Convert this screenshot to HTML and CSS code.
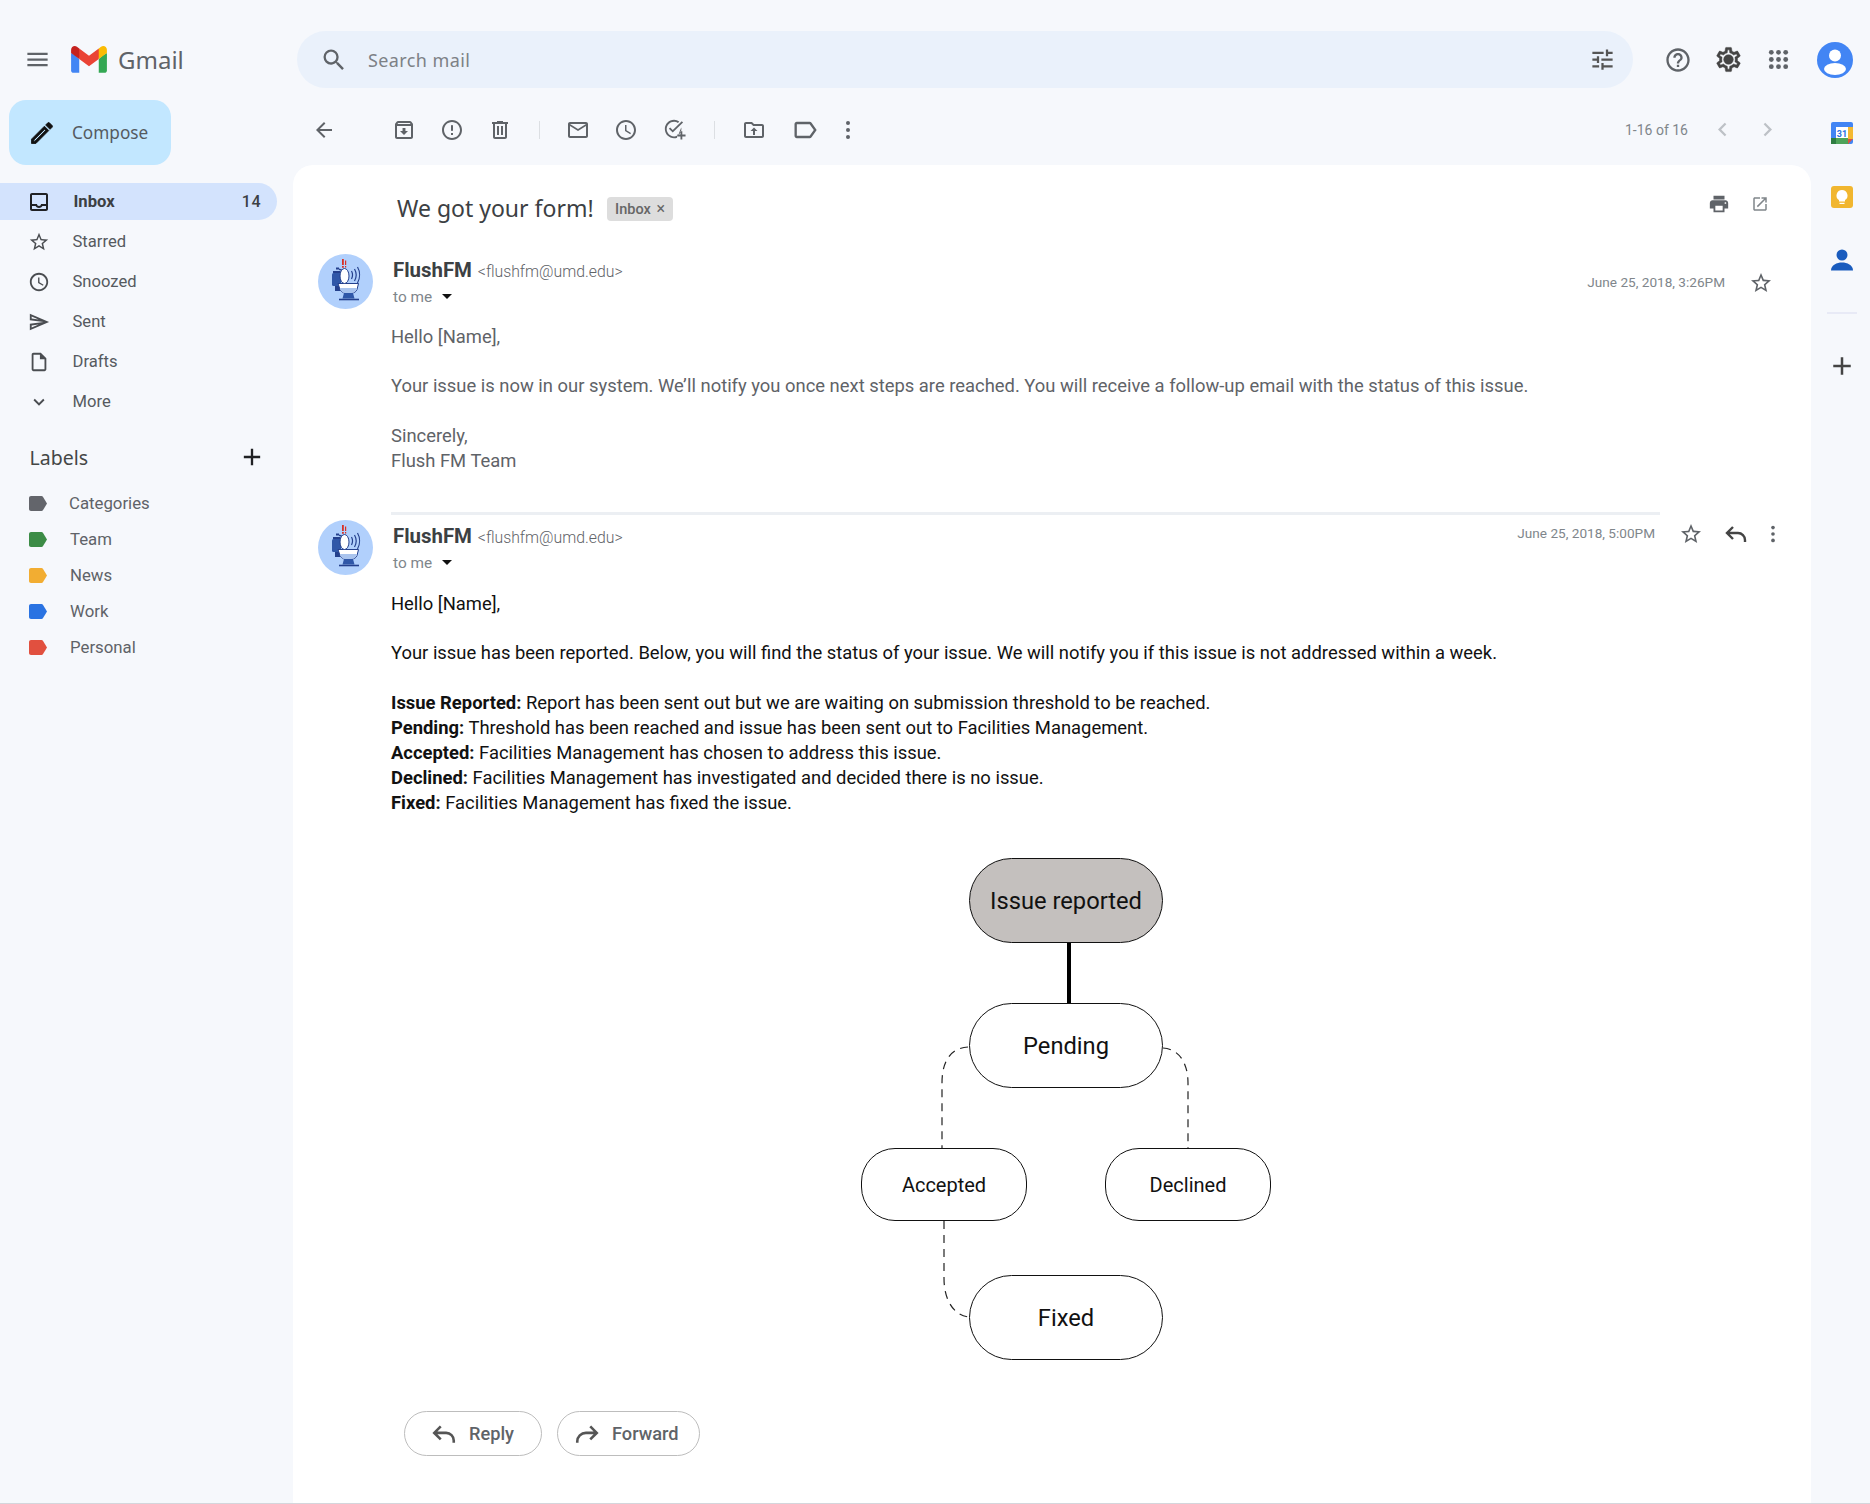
FILE: index.html
```html
<!DOCTYPE html>
<html lang="en">
<head>
    <meta charset="UTF-8">
    <title>Gmail</title>
    <link rel="stylesheet" href="styles.css">
</head>
<body>

<svg class="sprite" xmlns="http://www.w3.org/2000/svg">
    <symbol id="i-star" viewBox="0 0 24 24"><path d="M22 9.24l-7.19-.62L12 2 9.19 8.63 2 9.24l5.46 4.73L5.82 21 12 17.27 18.18 21l-1.63-7.03L22 9.24zM12 15.4l-3.76 2.27 1-4.28-3.32-2.88 4.38-.38L12 6.1l1.71 4.04 4.38.38-3.32 2.88 1 4.28L12 15.4z"/></symbol>
    <symbol id="i-clock" viewBox="0 0 24 24"><path d="M11.99 2C6.47 2 2 6.48 2 12s4.47 10 9.99 10C17.52 22 22 17.52 22 12S17.52 2 11.99 2zM12 20c-4.42 0-8-3.58-8-8s3.58-8 8-8 8 3.58 8 8-3.58 8-8 8zm.5-13H11v6l5.25 3.15.75-1.23-4.5-2.67z"/></symbol>
    <symbol id="i-reply" viewBox="0 0 24 24"><path d="M9 5L3 11l6 6M3.6 11H14a7 7 0 0 1 7 7v2" fill="none" stroke="currentColor" stroke-width="2.4"/></symbol>
    <symbol id="i-forward" viewBox="0 0 24 24"><path d="M15 5l6 6-6 6M20.4 11H11a8 8 0 0 0-8 8v1" fill="none" stroke="currentColor" stroke-width="2.4"/></symbol>
    <symbol id="i-more" viewBox="0 0 24 24"><circle cx="12" cy="5" r="2"/><circle cx="12" cy="12" r="2"/><circle cx="12" cy="19" r="2"/></symbol>
    <symbol id="i-caret" viewBox="0 0 10 5"><path d="M0 0h10L5 5z"/></symbol>
    <symbol id="i-tag" viewBox="0 0 18 15"><path d="M2 0h10.5c.6 0 1.1.3 1.4.7L18 7.5l-4.100 6.800c-.3.4-.8.7-1.400.7H2c-1.100 0-2-.9-2-2V2C0 .9.9 0 2 0z"/></symbol>
    <symbol id="i-avatar" viewBox="0 0 55 55">
        <circle cx="27.5" cy="27.500" r="27.500" fill="#b1d0fc"/>
        <path d="M15 17h7.500v2H15zM18 13.500h3v2h-3zM21 14.500l3 1v1.500l-3-1z" fill="#24408d"/>
        <rect x="14" y="19" width="9" height="13" rx="1.500" fill="#2f57a8"/>
        <rect x="17" y="32" width="7" height="5" fill="#24408d"/>
        <path d="M20 29.500h20.500l-1.500 6c-.5 2-3 3.500-5 3.500H27c-2 0-4-1.500-5-3.500z" fill="#fff" stroke="#24408d" stroke-width="1"/>
        <path d="M22 34h17l-.7 2c-.6 1.500-2.800 3-4.800 3H27c-2 0-3.800-1.500-4.500-3z" fill="#a9c4ee"/>
        <path d="M26 39h9l1.500 5.500H24.500z" fill="#2f57a8"/>
        <path d="M21 45.500h20" stroke="#24408d" stroke-width="1.600"/>
        <ellipse cx="26.500" cy="22" rx="4.500" ry="7.500" fill="#fff" stroke="#24408d" stroke-width="1"/>
        <path d="M33.500 17c1.300 2.500 1.300 5.500 0 8M36.500 15c2 3.500 2 8.500 0 12M39.500 13c2.700 4.500 2.700 11 0 16" fill="none" stroke="#24408d" stroke-width="1.200"/>
        <path d="M24 5h1.800v6H24zM24 12h1.800v1.800H24zM27 6.500h1.200v4.500H27zM27 12h1.200v1.500H27z" fill="#d93025"/>
    </symbol>
</svg>

<div class="app">

    <header class="topbar">
        <div class="brand">
            <svg class="icon brand-menu" viewBox="0 0 24 24"><path d="M3 18h18v-2H3v2zm0-5h18v-2H3v2zm0-7v2h18V6H3z"/></svg>
            <svg class="brand-logo" viewBox="0 0 256 193">
                <path fill="#4285F4" d="M58.182 192.05V93.14L27.507 65.077 0 49.504v125.091c0 9.658 7.825 17.455 17.455 17.455h40.727Z"/>
                <path fill="#34A853" d="M197.818 192.05h40.727c9.659 0 17.455-7.826 17.455-17.455V49.505l-31.156 17.837-27.026 25.798v98.91Z"/>
                <path fill="#EA4335" d="m58.182 93.14-4.174-38.647 4.174-36.989L128 69.868l69.818-52.364 4.669 34.992-4.669 40.644L128 145.504z"/>
                <path fill="#FBBC04" d="M197.818 17.504V93.14L256 49.504V26.231c0-21.585-24.64-33.89-41.89-20.945l-16.292 12.218Z"/>
                <path fill="#C5221F" d="m0 49.504 26.759 20.07L58.182 93.14V17.504L41.89 5.286C24.61-7.66 0 4.646 0 26.23v23.273Z"/>
            </svg>
            <span class="brand-name">Gmail</span>
        </div>
        <div class="search">
            <svg class="icon search-icon" viewBox="0 0 24 24"><path d="M15.5 14h-.79l-.28-.27A6.471 6.471 0 0 0 16 9.5 6.5 6.5 0 1 0 9.5 16c1.61 0 3.09-.59 4.23-1.57l.27.28v.79l5 4.99L20.49 19l-4.99-5zm-6 0C7.01 14 5 11.99 5 9.5S7.01 5 9.5 5 14 7.01 14 9.5 11.99 14 9.5 14z"/></svg>
            <span class="search-text">Search mail</span>
            <svg class="icon search-tune" viewBox="0 0 24 24"><path d="M3 17v2h6v-2H3zM3 5v2h10V5H3zm10 16v-2h8v-2h-8v-2h-2v6h2zM7 9v2H3v2h4v2h2V9H7zm14 4v-2H11v2h10zm-6-4h2V7h4V5h-4V3h-2v6z"/></svg>
        </div>
        <div class="top-actions">
            <div class="top-btn"><svg class="icon" viewBox="0 0 24 24"><path d="M11 18h2v-2h-2v2zm1-16C6.48 2 2 6.48 2 12s4.48 10 10 10 10-4.48 10-10S17.52 2 12 2zm0 18c-4.41 0-8-3.59-8-8s3.59-8 8-8 8 3.59 8 8-3.59 8-8 8zm0-14c-2.21 0-4 1.79-4 4h2c0-1.1.9-2 2-2s2 .9 2 2c0 2-3 1.75-3 5h2c0-2.25 3-2.5 3-5 0-2.21-1.79-4-4-4z"/></svg></div>
            <div class="top-btn"><svg class="icon gear" viewBox="0 0 24 24"><path d="M19.43 12.98c.04-.32.07-.64.07-.98 0-.34-.03-.66-.07-.98l2.11-1.65c.19-.15.24-.42.12-.64l-2-3.46c-.09-.16-.26-.25-.44-.25-.06 0-.12.01-.17.03l-2.49 1c-.52-.4-1.08-.73-1.69-.98l-.38-2.65C14.46 2.18 14.25 2 14 2h-4c-.25 0-.46.18-.49.42l-.38 2.65c-.61.25-1.17.59-1.69.98l-2.49-1c-.06-.02-.12-.03-.18-.03-.17 0-.34.09-.43.25l-2 3.46c-.13.22-.07.49.12.64l2.11 1.65c-.04.32-.07.65-.07.98 0 .33.03.66.07.98l-2.11 1.65c-.19.15-.24.42-.12.64l2 3.46c.09.16.26.25.44.25.06 0 .12-.01.17-.03l2.49-1c.52.4 1.08.73 1.69.98l.38 2.65c.03.24.24.42.49.42h4c.25 0 .46-.18.49-.42l.38-2.65c.61-.25 1.17-.59 1.69-.98l2.49 1c.06.02.12.03.18.03.17 0 .34-.09.43-.25l2-3.46c.12-.22.07-.49-.12-.64l-2.11-1.65zm-1.98-1.71c.04.31.05.52.05.73 0 .21-.02.43-.05.73l-.14 1.13.89.7 1.08.84-.7 1.21-1.27-.51-1.04-.42-.9.68c-.43.32-.84.56-1.25.73l-1.06.43-.16 1.13-.2 1.35h-1.4l-.19-1.35-.16-1.13-1.06-.43c-.43-.18-.83-.41-1.23-.71l-.91-.7-1.06.43-1.27.51-.7-1.21 1.08-.84.89-.7-.14-1.13c-.03-.31-.05-.54-.05-.74s.02-.43.05-.73l.14-1.13-.89-.7-1.08-.84.7-1.21 1.27.51 1.04.42.9-.68c.43-.32.84-.56 1.25-.73l1.06-.43.16-1.13.2-1.35h1.39l.19 1.35.16 1.13 1.06.43c.43.18.83.41 1.23.71l.91.7 1.06-.43 1.27-.51.7 1.21-1.07.85-.89.7.14 1.13z"/><circle cx="12" cy="12" r="4"/></svg></div>
            <div class="top-btn"><svg class="icon" viewBox="0 0 24 24"><circle cx="4.500" cy="4.500" r="2.500"/><circle cx="12" cy="4.500" r="2.500"/><circle cx="19.500" cy="4.500" r="2.500"/><circle cx="4.500" cy="12" r="2.500"/><circle cx="12" cy="12" r="2.500"/><circle cx="19.500" cy="12" r="2.500"/><circle cx="4.500" cy="19.500" r="2.500"/><circle cx="12" cy="19.500" r="2.500"/><circle cx="19.500" cy="19.500" r="2.500"/></svg></div>
            <svg class="account" viewBox="0 0 36 36">
                <circle cx="18" cy="18" r="18" fill="#4285f4"/>
                <circle cx="18" cy="13.500" r="6" fill="#fff"/>
                <ellipse cx="18" cy="27" rx="11" ry="6" fill="#fff"/>
            </svg>
        </div>
    </header>

    <div class="layout">

        <aside class="sidebar">
            <div class="compose">
                <svg class="icon compose-icon" viewBox="0 0 24 24"><path d="M3 17.25V21h3.75L17.81 9.94l-3.75-3.75L3 17.25zM5.920 19H5v-.92l9.06-9.06.92.92L5.920 19zM20.710 5.630l-2.340-2.340c-.2-.2-.45-.29-.71-.29s-.51.1-.7.29l-1.830 1.830 3.750 3.750 1.830-1.830c.39-.39.39-1.020 0-1.410z"/></svg>
                <span>Compose</span>
            </div>
            <nav class="nav">
                <div class="nav-row active">
                    <svg class="icon nav-icon" viewBox="0 0 24 24"><path d="M19 3H5c-1.100 0-2 .9-2 2v14c0 1.100.9 2 2 2h14c1.100 0 2-.9 2-2V5c0-1.100-.9-2-2-2zm0 16H5v-3h3.560c.69 1.190 1.970 2 3.440 2s2.750-.81 3.440-2H19v3zm0-5h-4.990c0 1.100-.9 2-2 2s-2-.9-2-2H5V5h14v9z"/></svg>
                    <span>Inbox</span>
                    <span class="nav-count">14</span>
                </div>
                <div class="nav-row">
                    <svg class="icon nav-icon"><use href="#i-star"/></svg>
                    <span>Starred</span>
                </div>
                <div class="nav-row">
                    <svg class="icon nav-icon"><use href="#i-clock"/></svg>
                    <span>Snoozed</span>
                </div>
                <div class="nav-row">
                    <svg class="icon nav-icon" viewBox="0 0 24 24"><path d="M4.010 6.030l7.510 3.220-7.520-1 .01-2.220m7.500 8.720L4 17.970v-2.220l7.510-1M2.010 3L2 10l15 2-15 2 .01 7L23 12 2.010 3z"/></svg>
                    <span>Sent</span>
                </div>
                <div class="nav-row">
                    <svg class="icon nav-icon" viewBox="0 0 24 24"><path d="M14 2H6c-1.100 0-1.990.9-1.990 2L4 20c0 1.100.89 2 1.990 2H18c1.100 0 2-.9 2-2V8l-6-6zM6 20V4h7v5h5v11H6z"/></svg>
                    <span>Drafts</span>
                </div>
                <div class="nav-row">
                    <svg class="icon nav-icon" viewBox="0 0 24 24"><path d="M16.590 8.590L12 13.170 7.410 8.590 6 10l6 6 6-6z"/></svg>
                    <span>More</span>
                </div>
            </nav>
            <div class="labels-head">
                <span>Labels</span>
                <svg class="icon labels-add" viewBox="0 0 24 24"><path d="M19 13h-6v6h-2v-6H5v-2h6V5h2v6h6v2z"/></svg>
            </div>
            <div class="labels">
                <div class="label-row"><svg class="tag tag-gray"><use href="#i-tag"/></svg><span>Categories</span></div>
                <div class="label-row"><svg class="tag tag-green"><use href="#i-tag"/></svg><span>Team</span></div>
                <div class="label-row"><svg class="tag tag-yellow"><use href="#i-tag"/></svg><span>News</span></div>
                <div class="label-row"><svg class="tag tag-blue"><use href="#i-tag"/></svg><span>Work</span></div>
                <div class="label-row"><svg class="tag tag-red"><use href="#i-tag"/></svg><span>Personal</span></div>
            </div>
        </aside>

        <main class="center">
            <div class="toolbar">
                <div class="tbtn tbtn-back"><svg class="icon" viewBox="0 0 24 24"><path d="M20 11H7.830l5.590-5.590L12 4l-8 8 8 8 1.410-1.410L7.830 13H20v-2z"/></svg></div>
                <div class="tbtn"><svg class="icon" viewBox="0 0 24 24"><path d="M20.540 5.230l-1.390-1.680C18.880 3.210 18.470 3 18 3H6c-.47 0-.88.21-1.160.55L3.460 5.230C3.170 5.570 3 6.020 3 6.500V19c0 1.100.9 2 2 2h14c1.100 0 2-.9 2-2V6.500c0-.48-.17-.93-.46-1.270zM6.240 5h11.520l.81.97H5.440l.8-.97zM5 19V8h14v11H5zm8.450-9h-2.900v3H8l4 4 4-4h-2.550z"/></svg></div>
                <div class="tbtn"><svg class="icon" viewBox="0 0 24 24"><path d="M12 7c.55 0 1 .45 1 1v4c0 .55-.45 1-1 1s-1-.45-1-1V8c0-.55.45-1 1-1zm-.01-5C6.470 2 2 6.480 2 12s4.470 10 9.990 10C17.520 22 22 17.520 22 12S17.520 2 11.990 2zM12 20c-4.420 0-8-3.580-8-8s3.580-8 8-8 8 3.580 8 8-3.580 8-8 8zm1-3h-2v-2h2v2z"/></svg></div>
                <div class="tbtn"><svg class="icon" viewBox="0 0 24 24"><path d="M15 4V3H9v1H4v2h1v13c0 1.100.9 2 2 2h10c1.100 0 2-.9 2-2V6h1V4h-5zm2 15H7V6h10v13zM9 8h2v9H9zm4 0h2v9h-2z"/></svg></div>
                <div class="tdivider tdivider-first"></div>
                <div class="tbtn"><svg class="icon" viewBox="0 0 24 24"><path d="M20 4H4c-1.100 0-1.990.9-1.990 2L2 18c0 1.100.9 2 2 2h16c1.100 0 2-.9 2-2V6c0-1.100-.9-2-2-2zm0 14H4V8l8 5 8-5v10zm-8-7L4 6h16l-8 5z"/></svg></div>
                <div class="tbtn"><svg class="icon"><use href="#i-clock"/></svg></div>
                <div class="tbtn"><svg class="icon icon-task" viewBox="0 0 25 25"><path d="M21.800 4.900L10.600 15.800l-4.200-4.200 1.400-1.400 2.800 2.800 9.800-9.500zM19.800 10.200c.1.600.2 1.200.2 1.800 0 4.400-3.600 8-8 8s-8-3.600-8-8 3.600-8 8-8c1.600 0 3 .5 4.300 1.300l1.400-1.500A10 10 0 0 0 12 2C6.500 2 2 6.500 2 12s4.500 10 10 10c1.200 0 2.300-.2 3.300-.6v-2.200c.3-.1.600-.2.900-.3h.2zM19 14.500v3.500h-3.500v2H19v3.500h2V20h3.500v-2H21v-3.500z"/></svg></div>
                <div class="tdivider tdivider-second"></div>
                <div class="tbtn"><svg class="icon" viewBox="0 0 24 24"><path d="M20 6h-8l-2-2H4c-1.100 0-2 .9-2 2v12c0 1.100.9 2 2 2h16c1.100 0 2-.9 2-2V8c0-1.100-.9-2-2-2zm0 12H4V6h5.170l2 2H20v10zM11 17h2v-4h2.500L12 9.500 8.500 13H11z"/></svg></div>
                <div class="tbtn tbtn-label"><svg class="icon" viewBox="0 0 24 24"><path d="M17.630 5.840C17.270 5.330 16.670 5 16 5L5 5.010C3.900 5.010 3 5.900 3 7v10c0 1.100.9 1.990 2 1.990L16 19c.67 0 1.270-.33 1.630-.84L22 12l-4.370-6.160zM16 17H5V7h11l3.550 5L16 17z"/></svg></div>
                <div class="tbtn tbtn-more"><svg class="icon"><use href="#i-more"/></svg></div>
                <div class="pager">
                    <span class="pager-text">1-16 of 16</span>
                    <div class="pager-btn"><svg class="icon" viewBox="0 0 24 24"><path d="M15.410 7.410L14 6l-6 6 6 6 1.410-1.410L10.830 12z"/></svg></div>
                    <div class="pager-btn"><svg class="icon" viewBox="0 0 24 24"><path d="M10 6L8.590 7.410 13.170 12l-4.580 4.590L10 18l6-6z"/></svg></div>
                </div>
            </div>

            <section class="card">
                <div class="subject-row">
                    <h1 class="subject">We got your form!</h1>
                    <span class="chip">Inbox <i class="chip-x">×</i></span>
                    <div class="subject-actions">
                        <svg class="icon subject-print" viewBox="0 0 24 24"><path d="M19 8H5c-1.660 0-3 1.340-3 3v6h4v4h12v-4h4v-6c0-1.660-1.340-3-3-3zm-3 11H8v-5h8v5zm3-7c-.55 0-1-.45-1-1s.45-1 1-1 1 .45 1 1-.45 1-1 1zm-1-9H6v4h12V3z"/></svg>
                        <svg class="icon subject-open" viewBox="0 0 24 24"><path d="M19 19H5V5h7V3H5c-1.110 0-2 .9-2 2v14c0 1.100.89 2 2 2h14c1.100 0 2-.9 2-2v-7h-2v7zM14 3v2h3.590l-9.830 9.830 1.410 1.410L19 6.410V10h2V3h-7z"/></svg>
                    </div>
                </div>

                <article class="msg msg-old">
                    <svg class="avatar"><use href="#i-avatar"/></svg>
                    <div class="msg-main">
                        <div class="msg-head">
                            <div class="sender">
                                <div class="sender-line"><b>FlushFM</b> <span>&lt;flushfm@umd.edu&gt;</span></div>
                                <div class="to-line">to me <svg class="caret"><use href="#i-caret"/></svg></div>
                            </div>
                            <div class="msg-meta meta-first">
                                <span class="msg-date">June 25, 2018, 3:26PM</span>
                                <svg class="icon meta-star"><use href="#i-star"/></svg>
                            </div>
                        </div>
                        <div class="msg-body">
                            <p>Hello [Name],</p>
                            <p>Your issue is now in our system. We’ll notify you once next steps are reached. You will receive a follow-up email with the status of this issue.</p>
                            <p>Sincerely,<br>Flush FM Team</p>
                        </div>
                    </div>
                </article>

                <div class="msg-divider"></div>

                <article class="msg msg-new">
                    <svg class="avatar"><use href="#i-avatar"/></svg>
                    <div class="msg-main">
                        <div class="msg-head">
                            <div class="sender">
                                <div class="sender-line"><b>FlushFM</b> <span>&lt;flushfm@umd.edu&gt;</span></div>
                                <div class="to-line">to me <svg class="caret"><use href="#i-caret"/></svg></div>
                            </div>
                            <div class="msg-meta meta-second">
                                <span class="msg-date">June 25, 2018, 5:00PM</span>
                                <svg class="icon meta-star"><use href="#i-star"/></svg>
                                <svg class="icon meta-reply"><use href="#i-reply"/></svg>
                                <svg class="icon meta-more"><use href="#i-more"/></svg>
                            </div>
                        </div>
                        <div class="msg-body">
                            <p>Hello [Name],</p>
                            <p>Your issue has been reported. Below, you will find the status of your issue. We will notify you if this issue is not addressed within a week.</p>
                            <p><b>Issue Reported:</b> Report has been sent out but we are waiting on submission threshold to be reached.<br>
                            <b>Pending:</b> Threshold has been reached and issue has been sent out to Facilities Management.<br>
                            <b>Accepted:</b> Facilities Management has chosen to address this issue.<br>
                            <b>Declined:</b> Facilities Management has investigated and decided there is no issue.<br>
                            <b>Fixed:</b> Facilities Management has fixed the issue.</p>
                        </div>
                        <div class="diagram">
                            <svg class="links" viewBox="0 0 410 502">
                                <path class="link-solid" d="M208 84V145"/>
                                <path class="link-dash" d="M107 189C92 190 81 200 81 225V291"/>
                                <path class="link-dash" d="M302 190C318 191 327 205 327 225V291"/>
                                <path class="link-dash" d="M83 363V420C83 445 95 458 108 459"/>
                            </svg>
                            <div class="node node-big node-issue">Issue reported</div>
                            <div class="node node-big node-pending">Pending</div>
                            <div class="node node-small node-accepted">Accepted</div>
                            <div class="node node-small node-declined">Declined</div>
                            <div class="node node-big node-fixed">Fixed</div>
                        </div>
                    </div>
                </article>

                <div class="actions">
                    <div class="action action-reply"><svg class="icon"><use href="#i-reply"/></svg><span>Reply</span></div>
                    <div class="action action-forward"><svg class="icon"><use href="#i-forward"/></svg><span>Forward</span></div>
                </div>
            </section>
        </main>

        <aside class="addons">
            <svg class="addon" viewBox="0 0 22 22">
                <rect width="22" height="22" rx="2" fill="#4285f4"/>
                <rect x="0" y="16" width="18" height="6" fill="#4fa35a"/>
                <rect x="0" y="16" width="5" height="6" fill="#2e7d42"/>
                <rect x="17" y="5" width="5" height="12" fill="#f4b932"/>
                <path d="M17 17h5l-5 5z" fill="#e0523f"/>
                <rect x="5" y="5" width="12" height="11" fill="#fff"/>
                <text x="11" y="14.500" class="addon-day">31</text>
            </svg>
            <svg class="addon" viewBox="0 0 22 22">
                <rect width="22" height="22" rx="3" fill="#f1b62f"/>
                <path d="M11 4a5.500 5.500 0 0 0-3 10.100V15.500h6v-1.400A5.500 5.500 0 0 0 11 4zM8.500 16.700h5V18h-5z" fill="#fff"/>
            </svg>
            <svg class="addon" viewBox="0 0 22 22">
                <circle cx="11" cy="6" r="5.500" fill="#1a5cbe"/>
                <path d="M0 21.500C0 16 6 13.500 11 13.500S22 16 22 21.500z" fill="#1a5cbe"/>
            </svg>
            <div class="addons-rule"></div>
            <svg class="icon addon-plus" viewBox="0 0 24 24"><path d="M19 13h-6v6h-2v-6H5v-2h6V5h2v6h6v2z"/></svg>
        </aside>

    </div>
</div>

</body>
</html>
```

FILE: styles.css
```css
*{
    margin: 0;
    padding: 0;
    box-sizing: border-box;
}
body{
    background-color: #f6f8fc;
    font-family: Roboto, "Liberation Sans", sans-serif;
    overflow: hidden;
}
.sprite{
    display: none;
}
.icon{
    display: block;
    width: 24px;
    height: 24px;
    fill: #5f6368;
    color: #5f6368;
    flex: none;
}
.app{
    display: flex;
    flex-direction: column;
    height: 1504px;
    border-bottom: 1px solid #d4d6dc;
}

/* top bar */
.topbar{
    display: flex;
    height: 100px;
    flex: none;
    padding-top: 31px;
}
.brand{
    display: flex;
    align-items: center;
    width: 297px;
    height: 57px;
    flex: none;
    padding-left: 24px;
}
.brand-menu{
    width: 27px;
    height: 27px;
}
.brand-logo{
    width: 36px;
    height: 27px;
    margin-left: 20px;
}
.brand-name{
    margin-left: 11px;
    font-family: "Noto Sans", sans-serif;
    font-size: 24px;
    color: #5f6368;
    letter-spacing: 0;
}
.search{
    display: flex;
    align-items: center;
    width: 1336px;
    height: 57px;
    flex: none;
    padding: 0 17px 0 23px;
    background-color: #eaf1fb;
    border-radius: 29px;
}
.search-icon{
    width: 28px;
    height: 28px;
}
.search-text{
    margin-left: 20px;
    font-family: "Noto Sans", sans-serif;
    font-size: 18px;
    letter-spacing: 0.4px;
    color: #7d8186;
}
.search-tune{
    margin-left: auto;
    width: 27px;
    height: 27px;
    fill: #555;
}
.top-actions{
    display: flex;
    align-items: center;
    height: 57px;
    margin-left: 20px;
}
.top-btn{
    display: flex;
    align-items: center;
    justify-content: center;
    width: 50px;
}
.top-btn .icon{
    width: 28px;
    height: 28px;
}
.top-btn .gear{
    width: 29px;
    height: 29px;
    margin-left: 1px;
    fill: #444;
    stroke: #444;
    stroke-width: 0.4;
}
.top-btn:nth-child(3) .icon{
    width: 23px;
    height: 23px;
}
.account{
    width: 36px;
    height: 36px;
    margin-left: 14px;
}

/* page below the top bar */
.layout{
    display: flex;
    flex: 1;
    min-height: 0;
}

/* left column */
.sidebar{
    width: 293px;
    flex: none;
}
.compose{
    display: flex;
    align-items: center;
    width: 162px;
    height: 65px;
    margin-left: 9px;
    padding-left: 19px;
    background-color: #c2e7ff;
    border-radius: 17px;
    font-family: "Noto Sans", sans-serif;
    font-size: 17.2px;
    color: #555a5f;
}
.compose-icon{
    width: 28px;
    height: 28px;
    margin-right: 16px;
    fill: #111;
    stroke: #111;
    stroke-width: 0.7;
}
.nav{
    margin-top: 18px;
}
.nav-row{
    display: flex;
    align-items: center;
    width: 277px;
    height: 37px;
    margin-bottom: 3px;
    padding-left: 27.5px;
    padding-right: 16px;
    border-radius: 0 19px 19px 0;
    font-size: 16.6px;
    color: #555a5f;
}
.nav-row.active{
    background-color: #d3e3fd;
    padding-left: 26.5px;
    font-weight: 700;
    color: #3c4043;
}
.nav-row.active .nav-icon{
    width: 24px;
    height: 24px;
    fill: #202124;
}
.nav-icon{
    width: 22px;
    height: 22px;
    margin-right: 23px;
    fill: #4a4d51;
}
.nav-count{
    margin-left: auto;
    font-weight: 500;
    font-size: 16px;
    letter-spacing: 0.5px;
}
.labels-head{
    display: flex;
    align-items: center;
    justify-content: space-between;
    width: 277px;
    height: 40px;
    margin-top: 17px;
    padding: 0 11px 0 29.500px;
    font-family: "Noto Sans", sans-serif;
    font-size: 19.5px;
    color: #444746;
}
.labels-add{
    width: 28px;
    height: 28px;
    fill: #202124;
}
.labels{
    margin-top: 8px;
}
.label-row{
    display: flex;
    align-items: center;
    height: 36px;
    padding-left: 29px;
    font-size: 16.8px;
    color: #5f6368;
}
.tag{
    width: 18px;
    height: 15px;
    margin-right: 23px;
}
.tag-gray{
    fill: #63656b;
    margin-right: 22px;
}
.tag-green{
    fill: #3c8c46;
}
.tag-yellow{
    fill: #f2ad32;
}
.tag-blue{
    fill: #2a73e2;
}
.tag-red{
    fill: #e1503f;
}

/* middle column */
.center{
    display: flex;
    flex-direction: column;
    width: 1518px;
    flex: none;
}
.toolbar{
    display: flex;
    align-items: center;
    height: 65px;
    flex: none;
    padding: 0 21px 6px 7px;
}
.tbtn{
    display: flex;
    align-items: center;
    justify-content: center;
    width: 48px;
}
.tbtn-back{
    margin-right: 32px;
}
.tbtn-label{
    margin-left: 3px;
}
.tbtn-label .icon{
    width: 28px;
    height: 28px;
}
.tbtn-more{
    width: 38px;
}
.icon-task{
    width: 23px;
    height: 23px;
}
.tdivider{
    width: 1px;
    height: 18px;
    background-color: #dcdfe3;
}
.tdivider-first{
    margin: 0 14px 0 15px;
}
.tdivider-second{
    margin: 0 15px 0 16px;
}
.pager{
    display: flex;
    align-items: center;
    margin-left: auto;
}
.pager-text{
    margin-right: 12px;
    font-size: 14px;
    color: #80868b;
}
.pager-btn{
    display: flex;
    justify-content: center;
    width: 45px;
}
.pager-btn .icon{
    width: 27px;
    height: 27px;
    fill: #bdc1c6;
}
.card{
    flex: 1;
    background-color: #fff;
    border-radius: 20px 20px 0 0;
}
.subject-row{
    display: flex;
    align-items: flex-start;
    height: 89px;
    padding: 24px 42px 0 104px;
}
.subject{
    font-family: "Noto Sans", sans-serif;
    font-weight: 400;
    font-size: 23px;
    line-height: 38px;
    color: #3c4043;
}
.chip{
    margin: 8px 0 0 13px;
    padding: 0 8.500px;
    height: 24px;
    line-height: 24px;
    background-color: #dddddd;
    border-radius: 4px;
    font-size: 14.500px;
    font-weight: 500;
    color: #666;
}
.chip-x{
    font-style: normal;
    font-weight: 400;
    font-size: 16px;
    margin-left: 2px;
}
.subject-actions{
    display: flex;
    align-items: center;
    margin: 4px 0 0 auto;
}
.subject-print{
    width: 22px;
    height: 22px;
    margin: 0 21px 0 1px;
}
.subject-open{
    width: 18px;
    height: 18px;
    fill: #80868b;
}

/* messages */
.msg{
    display: flex;
    padding-left: 25px;
}
.msg-new{
    margin-top: 5px;
}
.avatar{
    width: 55px;
    height: 55px;
    flex: none;
    margin-right: 18px;
}
.msg-main{
    flex: 1;
    min-width: 0;
}
.msg-head{
    display: flex;
    justify-content: space-between;
    align-items: flex-start;
    padding-left: 2px;
}
.sender{
    padding-top: 2px;
}
.sender-line{
    height: 28px;
    line-height: 28px;
    font-size: 15.8px;
    color: #5f6368;
    font-weight: 300;
    white-space: nowrap;
}
.sender-line b{
    font-size: 20.4px;
    font-weight: 700;
    color: #3c4043;
    margin-right: 2px;
}
.to-line{
    display: flex;
    align-items: center;
    height: 25px;
    font-size: 15.4px;
    color: #80868b;
}
.caret{
    width: 10px;
    height: 5px;
    margin-left: 10px;
    fill: #111;
}
.msg-meta{
    display: flex;
    align-items: center;
}
.meta-first{
    padding: 17px 38px 0 0;
}
.meta-second{
    padding: 2px 27px 0 0;
}
.msg-date{
    font-size: 13.6px;
    color: #80868b;
    margin: 0 24px 2px 0;
}
.meta-reply{
    margin-left: 21px;
    color: #444;
}
.meta-more{
    margin-left: 14px;
    width: 22px;
    height: 22px;
}
.msg-body{
    margin-top: 15px;
    font-size: 18.4px;
    line-height: 25px;
}
.msg-body p{
    margin-bottom: 25px;
}
.msg-body p:first-child{
    margin-bottom: 24px;
}
.msg-body p:last-child{
    margin-bottom: 0;
}
.msg-body b{
    font-weight: 700;
}
.msg-old .msg-body{
    color: #5f6368;
}
.msg-new .msg-body{
    margin-top: 16px;
    color: #111;
}
.msg-divider{
    width: 1269px;
    height: 3px;
    margin: 39px 0 0 98px;
    background-color: #eceff3;
}

/* status diagram: nodes sit on a free canvas */
.diagram{
    position: relative;
    width: 410px;
    height: 502px;
    margin: 43px 0 0 470px;
}
.links{
    position: absolute;
    left: 0;
    top: 0;
    width: 410px;
    height: 502px;
}
.link-solid{
    fill: none;
    stroke: #000;
    stroke-width: 4;
}
.link-dash{
    fill: none;
    stroke: #222;
    stroke-width: 1.2;
    stroke-dasharray: 8 6;
}
.node{
    position: absolute;
    display: flex;
    align-items: center;
    justify-content: center;
    padding-top: 1px;
    background-color: #fff;
    border: 1.3px solid #111;
    color: #111;
}
.node-big{
    width: 194px;
    height: 85px;
    border-radius: 43px;
    font-size: 23.7px;
}
.node-small{
    width: 166px;
    height: 72.500px;
    border-radius: 34px;
    font-size: 20px;
}
.node-issue{
    left: 108px;
    top: 0;
    background-color: #c4c0be;
}
.node-pending{
    left: 108px;
    top: 145px;
}
.node-accepted{
    left: 0;
    top: 290px;
}
.node-declined{
    left: 244px;
    top: 290px;
}
.node-fixed{
    left: 108px;
    top: 417px;
}

/* reply and forward */
.actions{
    display: flex;
    gap: 15px;
    margin: 51px 0 0 111px;
}
.action{
    display: flex;
    align-items: center;
    height: 45px;
    border: 1.3px solid #bdbdbd;
    border-radius: 23px;
    font-size: 18.2px;
    font-weight: 500;
    color: #5f6368;
}
.action .icon{
    width: 26px;
    height: 26px;
    color: #555;
    margin-right: 12px;
}
.action-reply{
    width: 138px;
    padding-left: 26px;
}
.action-forward{
    width: 143px;
    padding-left: 16px;
}

/* right column */
.addons{
    display: flex;
    flex-direction: column;
    align-items: center;
    width: 59px;
    flex: none;
    padding: 22px 0 0 3px;
}
.addon{
    display: block;
    width: 22px;
    height: 22px;
    margin-bottom: 41px;
}
.addon:first-child{
    margin-bottom: 42px;
}
.addon-day{
    font-family: Roboto, sans-serif;
    font-size: 9px;
    font-weight: 700;
    fill: #2a73e2;
    text-anchor: middle;
}
.addons-rule{
    width: 30px;
    height: 2px;
    background-color: #e8eaf6;
}
.addon-plus{
    width: 30px;
    height: 30px;
    margin-top: 37px;
    fill: #444;
}
```
